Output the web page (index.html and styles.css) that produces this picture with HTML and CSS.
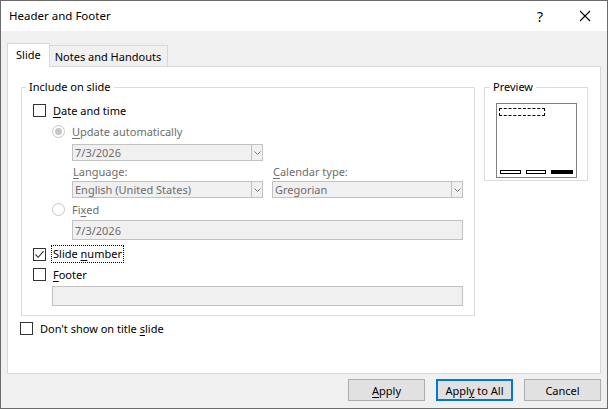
FILE: index.html
```html
<!DOCTYPE html>
<html lang="en">
<head>
    <meta charset="UTF-8">
    <title>Header and Footer</title>
    <link rel="stylesheet" href="styles.css">
</head>
<body>
    <div class="window">
        <div class="titlebar">
            <span class="title">Header and Footer</span>
            <span class="help">?</span>
            <svg class="close" width="12" height="12" viewBox="0 0 12 12"><path d="M1 1L11 11M11 1L1 11" stroke="#000" stroke-width="1.1" fill="none"/></svg>
        </div>
        <div class="body">
            <div class="tabs">
                <div class="tab active">Slide</div>
                <div class="tab">Notes and Handouts</div>
            </div>
            <div class="panel">
                <div class="panel-top">
                    <fieldset class="group include">
                        <legend>Include on slide</legend>
                        <div class="row">
                            <span class="box"></span>
                            <span><u>D</u>ate and time</span>
                        </div>
                        <div class="sub">
                            <div class="row update">
                                <svg class="radio" width="13" height="13" viewBox="0 0 13 13"><circle cx="6.5" cy="6.5" r="6" fill="#fff" stroke="#c6c6c6"/><circle cx="6.5" cy="6.5" r="3.5" fill="#c6c6c6"/></svg>
                                <span class="off"><u>U</u>pdate automatically</span>
                            </div>
                            <div class="indent">
                                <div class="field combo date">
                                    <span>7/3/2026</span><span class="arrow"><svg width="7" height="4" viewBox="0 0 7 4"><path d="M0.5 0.5L3.5 3.5L6.5 0.5" stroke="#7a7a7a" fill="none"/></svg></span>
                                </div>
                                <div class="pair">
                                    <div class="col">
                                        <div class="label off"><u>L</u>anguage:</div>
                                        <div class="field combo">
                                            <span>English (United States)</span><span class="arrow"><svg width="7" height="4" viewBox="0 0 7 4"><path d="M0.5 0.5L3.5 3.5L6.5 0.5" stroke="#7a7a7a" fill="none"/></svg></span>
                                        </div>
                                    </div>
                                    <div class="col">
                                        <div class="label off"><u>C</u>alendar type:</div>
                                        <div class="field combo">
                                            <span>Gregorian</span><span class="arrow"><svg width="7" height="4" viewBox="0 0 7 4"><path d="M0.5 0.5L3.5 3.5L6.5 0.5" stroke="#7a7a7a" fill="none"/></svg></span>
                                        </div>
                                    </div>
                                </div>
                            </div>
                            <div class="row fixed">
                                <svg class="radio" width="13" height="13" viewBox="0 0 13 13"><circle cx="6.5" cy="6.5" r="6" fill="#fff" stroke="#c6c6c6"/></svg>
                                <span class="off">Fi<u>x</u>ed</span>
                            </div>
                            <div class="indent">
                                <div class="field text wide"><span>7/3/2026</span></div>
                            </div>
                        </div>
                        <div class="row slide-num">
                            <span class="box"><svg width="11" height="11" viewBox="0 0 11 11"><path d="M1.5 5.5L4.2 8.3L9.6 2.2" stroke="#333" stroke-width="1.1" fill="none"/></svg></span>
                            <span class="focus">Slide <u>n</u>umber</span>
                        </div>
                        <div class="row footer-row">
                            <span class="box"></span>
                            <span><u>F</u>ooter</span>
                        </div>
                        <div class="field text footer"></div>
                    </fieldset>
                    <fieldset class="group preview">
                        <legend>Preview</legend>
                        <div class="slide">
                            <div class="ph-date"></div>
                            <div class="ph-bars">
                                <span class="bar"></span>
                                <span class="bar mid"></span>
                                <span class="bar on"></span>
                            </div>
                        </div>
                    </fieldset>
                </div>
                <div class="row title-slide">
                    <span class="box"></span>
                    <span>Don't show on title <u>s</u>lide</span>
                </div>
            </div>
            <div class="buttons">
                <button class="btn"><u>A</u>pply</button>
                <button class="btn default">Appl<u>y</u> to All</button>
                <button class="btn">Cancel</button>
            </div>
        </div>
    </div>
</body>
</html>
```

FILE: styles.css
```css
*{
    margin: 0;
    padding: 0;
    box-sizing: border-box;
}
body{
    font-family: 'Noto Sans', sans-serif;
    font-size: 11px;
    color: #000;
    background: #fff;
}
u{
    text-decoration: underline;
    text-underline-offset: 2px;
}
.window{
    width: 608px;
    height: 409px;
    border: 1px solid #6b6b6b;
    display: flex;
    flex-direction: column;
    background: #f0f0f0;
}
.titlebar{
    height: 30px;
    background: #fff;
    display: flex;
    align-items: center;
    padding: 0 0 0 8px;
    font-size: 11.5px;
}
.title{
    flex: 1;
    padding-bottom: 1px;
}
.help{
    font-size: 14px;
    margin-right: 36px;
}
.close{
    margin-right: 16px;
}
.body{
    flex: 1;
    display: flex;
    flex-direction: column;
    padding: 12px 6px 0 6px;
}
.tabs{
    display: flex;
    align-items: flex-end;
    height: 23px;
}
.tab{
    height: 21px;
    padding: 0 6px 0 5px;
    border: 1px solid #d9d9d9;
    border-bottom: none;
    background: #f0f0f0;
    display: flex;
    align-items: center;
    margin-left: -1px;
}
.tab.active{
    height: 24px;
    margin-bottom: -1px;
    background: #fff;
    margin-left: 0;
    position: relative;
    z-index: 1;
    padding: 0 8px 2px 8px;
}
.panel{
    height: 308px;
    background: #fff;
    border: 1px solid #d9d9d9;
    padding: 12px 0 0 13px;
}
.panel-top{
    display: flex;
    gap: 9px;
    align-items: flex-start;
}
.group{
    border: 1px solid #dcdcdc;
    min-width: 0;
}
.group legend{
    padding: 0 3px;
    line-height: 16px;
}
.include{
    width: 454px;
    height: 237px;
    padding: 5px 0 0 11px;
}
.include legend{
    margin-left: -7px;
}
.row{
    display: flex;
    align-items: center;
    height: 20px;
}
.box{
    width: 13px;
    height: 13px;
    border: 1px solid #333;
    background: #fff;
    margin-right: 7px;
    display: flex;
    align-items: center;
    justify-content: center;
}
.sub{
    padding-left: 19px;
}
.update{
    margin-top: 1px;
}
.indent{
    padding-left: 20px;
}
.radio{
    margin-right: 7px;
}
.off{
    color: #6d6d6d;
}
.field{
    height: 17px;
    border: 1px solid #c2c2c2;
    background: #f0f0f0;
    color: #6d6d6d;
    display: flex;
    align-items: center;
    padding-left: 2px;
}
.combo{
    width: 191px;
    justify-content: space-between;
}
.combo .arrow{
    width: 11px;
    height: 15px;
    border-left: 1px solid #c2c2c2;
    display: flex;
    align-items: center;
    justify-content: center;
}
.date{
    margin-top: 3px;
}
.pair{
    display: flex;
    gap: 9px;
}
.label{
    line-height: 16px;
    margin: 3px 0 1px 1px;
}
.fixed{
    margin-top: 1px;
}
.text{
    height: 20px;
}
.wide{
    width: 391px;
    margin-top: 1px;
}
.slide-num{
    margin-top: 4px;
}
.footer-row{
    margin-top: 0;
}
.focus{
    outline: 1px dotted #000;
    outline-offset: 0;
    padding: 0 1px;
    margin-left: -1px;
    line-height: 16px;
}
.footer{
    width: 411px;
    margin: 2px 0 0 19px;
}
.preview{
    width: 104px;
    height: 102px;
    padding: 8px 0 0 0;
    display: flex;
    justify-content: center;
}
.preview legend{
    margin-left: 5px;
}
.slide{
    width: 81px;
    height: 75px;
    margin: 0 auto;
    border: 1px solid #808080;
    display: flex;
    flex-direction: column;
    justify-content: space-between;
    padding: 4px 3px 3px 2px;
}
.ph-date{
    width: 46px;
    height: 8px;
    border: 1px dashed #000;
}
.ph-bars{
    display: flex;
    gap: 5px;
    padding-left: 1px;
}
.bar{
    width: 22px;
    height: 4px;
    border: 1px solid #000;
}
.bar.mid{
    width: 20px;
}
.bar.on{
    background: #000;
}
.title-slide{
    margin: 2px 0 0 -1px;
}
.buttons{
    display: flex;
    justify-content: flex-end;
    gap: 11px;
    padding-top: 5px;
}
.btn{
    width: 77px;
    height: 22px;
    font-family: 'Noto Sans', sans-serif;
    font-size: 11px;
    background: #e1e1e1;
    border: 1px solid #adadad;
    color: #000;
}
.btn.default{
    border: 2px solid #0078d7;
}
```
